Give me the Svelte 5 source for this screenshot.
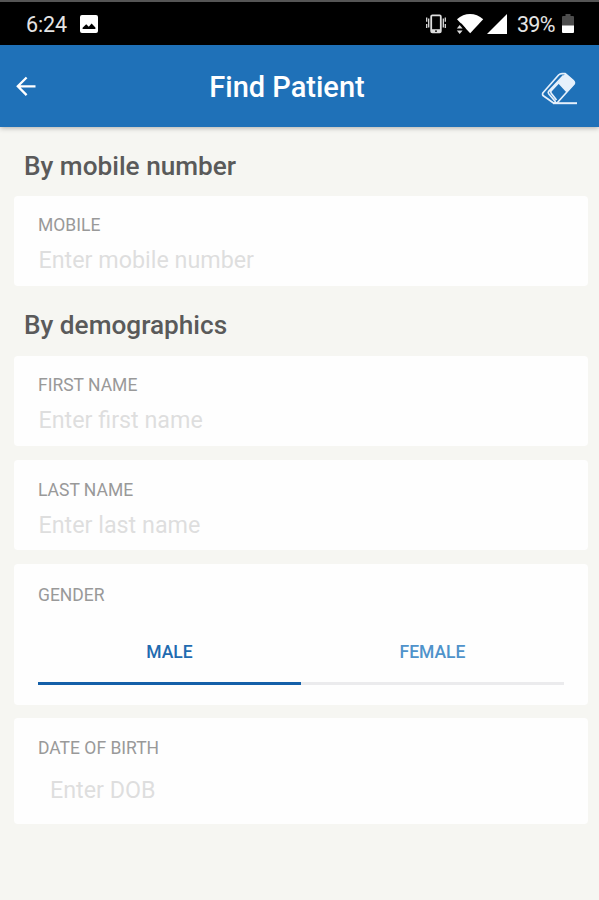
<script lang="ts">
  type Gender = "male" | "female";

  let mobile = $state("");
  let firstName = $state("");
  let lastName = $state("");
  let dob = $state("");
  let gender = $state<Gender>("male");

  const genders: Gender[] = ["male", "female"];

  function clearForm() {
    mobile = "";
    firstName = "";
    lastName = "";
    dob = "";
    gender = "male";
  }
</script>

<div class="screen">
  <!-- Status bar -->
  <div class="status-bar">
    <span class="clock">6:24</span>
    <svg class="icon-image" viewBox="0 0 18 18">
      <path fill="#fff" fill-rule="evenodd" d="M2 0h14a2 2 0 0 1 2 2v14a2 2 0 0 1-2 2H2a2 2 0 0 1-2-2V2a2 2 0 0 1 2-2zM2.6 14h12.8v-1.4l-3.8-4.2-2.8 3.3-2.6-2.5-3.6 3.6z" />
    </svg>
    <div class="status-right">
      <svg class="icon-vibrate" viewBox="0 0 20 20" fill="none" stroke="#ddd">
        <rect x="5.2" y="1.4" width="9.6" height="17" rx="1.2" stroke-width="1.8" />
        <path d="M5 16.7h10" stroke-width="3" />
        <path d="M9 17.2h2" stroke="#000" stroke-width="1.2" />
        <path d="M2.7 4.5v9M.7 3.5v4.2M.7 10v4M17.3 4.5v9M19.3 3.5v4.2M19.3 10v4" stroke-width="1.3" />
      </svg>
      <svg class="icon-wifi" viewBox="0 0 28 21">
        <path fill="#fff" d="M1 6.2C8.500-.8 19.500-.8 27.200 6.200L14.200 20.300z" />
        <path d="M-1 10.500h6.400l4 4.500V22H-1z" />
        <path fill="#ddd" d="M.8 15.500l2.900-3.500 2.900 3.500zM.8 17.500h5.800l-2.900 3.500z" />
      </svg>
      <svg class="icon-signal" viewBox="0 0 20 20">
        <path fill="#fff" d="M20 0v20H0z" />
      </svg>
      <span class="percent">39%</span>
      <svg class="icon-battery" viewBox="0 0 12 19">
        <path fill="#4d4d4d" d="M3.500 0h5v2H11a1 1 0 0 1 1 1v9H0V3a1 1 0 0 1 1-1h2.500z" />
        <path fill="#fff" d="M0 11.600h12V18a1 1 0 0 1-1 1H1a1 1 0 0 1-1-1z" />
      </svg>
    </div>
  </div>

  <header class="app-bar">
    <button class="back" aria-label="Back">
      <svg viewBox="0 0 20 20" fill="none" stroke="#fff" stroke-width="2.300">
        <path d="M19.500 10.300H2M10.600 1.500L1.800 10.300l8.800 8.800" />
      </svg>
    </button>
    <h1>Find Patient</h1>
    <button class="clear" aria-label="Clear" onclick={clearForm}>
      <svg viewBox="0 0 37 33" fill="none" stroke="#e6f0fb" stroke-width="1.700" stroke-linejoin="round">
        <path d="M12.500 31L2.300 23.800Q1 22.500 2 20.700L17.600 3Q19 1.600 21 1.600h3.200L32.600 9q1.600 1.700 0 3.500L16.500 30.500z" />
        <path fill="#e6f0fb" d="M17.700 10.600L22.500 4.500l2-1.900 8 7q1 1.200 0 2.300l-7 7.300z" />
        <path d="M22.500 3.500L7.700 19.300q-1 1.200 0 2.500l7 8.200M17.700 10.600l-7.500 8.200q-1 1.200 0 2.400l5.300 6.800" />
        <path d="M12 31.200h24" stroke-width="2" />
      </svg>
    </button>
  </header>

  <main>
    <h2>By mobile number</h2>
    <label class="card">
      <span class="label">Mobile</span>
      <input type="tel" placeholder="Enter mobile number" bind:value={mobile} />
    </label>

    <h2>By demographics</h2>
    <div class="cards">
      <label class="card">
        <span class="label">First name</span>
        <input placeholder="Enter first name" bind:value={firstName} />
      </label>
      <label class="card last-name">
        <span class="label">Last name</span>
        <input placeholder="Enter last name" bind:value={lastName} />
      </label>
      <div class="card gender">
        <span class="label">Gender</span>
        <div class="tabs">
          {#each genders as g (g)}
            <button class="tab" class:active={gender === g} onclick={() => (gender = g)}>{g}</button>
          {/each}
        </div>
      </div>
      <label class="card dob">
        <span class="label">Date of birth</span>
        <input placeholder="Enter DOB" bind:value={dob} />
      </label>
    </div>
  </main>
</div>

<style>
  :global(body) {
    background: #f6f6f2;
  }
  .screen {
    min-height: 900px;
    background: #f6f6f2;
    font-family: Roboto, sans-serif;
  }
  button {
    border: none;
    padding: 0;
    background: none;
    font-family: inherit;
    cursor: pointer;
  }
  svg {
    display: block;
    flex-shrink: 0;
  }

  /* Status bar */
  .status-bar {
    box-sizing: border-box;
    height: 45px;
    display: flex;
    align-items: center;
    padding: 0 25px 0 26px;
    border-top: 2px solid #555;
    background: #000;
    color: #e4e4e4;
    font-size: 21.5px;
  }
  .clock {
    letter-spacing: -0.1px;
    padding-top: 1px;
  }
  .icon-image {
    width: 18px;
    height: 18px;
    margin-left: 13px;
  }
  .status-right {
    display: flex;
    align-items: center;
    margin-left: auto;
  }
  .icon-vibrate {
    width: 20px;
    height: 20px;
  }
  .icon-wifi {
    width: 28px;
    height: 21px;
    margin-left: 10px;
  }
  .icon-signal {
    width: 20px;
    height: 20px;
    margin-left: 3px;
  }
  .percent {
    margin-left: 10px;
    padding-top: 1px;
    letter-spacing: -0.6px;
  }
  .icon-battery {
    width: 12px;
    height: 19px;
    margin-left: 7px;
  }

  /* App bar */
  .app-bar {
    position: relative;
    height: 82px;
    display: grid;
    grid-template-columns: 60px 1fr 85px;
    align-items: center;
    background: #1f71b8;
    box-shadow: 0 1px 5px rgba(0, 0, 0, 0.3);
  }
  .app-bar h1 {
    margin: 0;
    padding-top: 2px;
    text-align: center;
    font-size: 29px;
    font-weight: 500;
    line-height: 32px;
    color: #fff;
  }
  .back {
    padding-left: 16px;
  }
  .back svg {
    width: 20px;
    height: 20px;
  }
  .clear {
    padding: 5px 0 0 27px;
  }
  .clear svg {
    width: 37px;
    height: 33px;
  }

  /* Form */
  main {
    padding: 0 11px 0 14px;
  }
  h2 {
    margin: 0;
    padding: 24px 10px 14px;
    font-size: 26.2px;
    font-weight: 500;
    line-height: 31px;
    color: #5a5a5a;
  }
  .card + h2 {
    padding-bottom: 15px;
  }
  .cards {
    display: grid;
    gap: 14px;
  }
  .card {
    box-sizing: border-box;
    height: 90px;
    display: flex;
    flex-direction: column;
    padding: 19px 24px 0;
    border-radius: 4px;
    background: #fefefe;
  }
  .label {
    font-size: 17.5px;
    line-height: 20px;
    text-transform: uppercase;
    color: #999;
  }
  input {
    width: 100%;
    height: 30px;
    margin-top: 10px;
    padding: 0 0 0 0.5px;
    border: none;
    outline: none;
    background: none;
    font: 23.3px/30px Roboto, sans-serif;
    color: #555;
  }
  input::placeholder {
    color: #dedede;
    opacity: 1;
  }

  .last-name {
    padding-top: 20px;
  }
  .gender {
    height: 141px;
    padding-top: 21px;
  }
  .tabs {
    display: grid;
    grid-template-columns: 1fr 1fr;
    margin-top: 15px;
  }
  .tab {
    height: 65px;
    padding-top: 2px;
    border-bottom: 3px solid #ebebed;
    font-size: 17.5px;
    font-weight: 500;
    text-transform: uppercase;
    color: #4f93cb;
  }
  .tab.active {
    border-bottom-color: #1460a9;
    color: #1f6bb0;
  }
  .dob {
    height: 106px;
    margin-top: -1px;
    padding-top: 20px;
  }
  .dob input {
    margin-top: 17px;
    padding-left: 12px;
  }
</style>
